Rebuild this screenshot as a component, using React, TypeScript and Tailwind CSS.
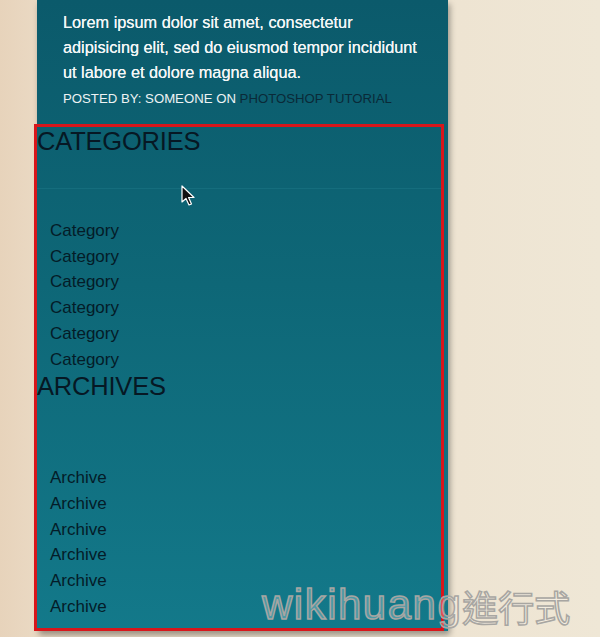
import React from "react";

const CATEGORIES = ["Category", "Category", "Category", "Category", "Category", "Category"];
const ARCHIVES = ["Archive", "Archive", "Archive", "Archive", "Archive", "Archive"];

function Cursor() {
	return (
		<svg width="16" height="22" viewBox="0 0 16 22" className="absolute left-[181px] top-[185px]">
			<path d="M1 1 L1 17 L5 13.5 L8 20 L10.5 19 L7.6 12.5 L13 12.5 Z" fill="#111" stroke="#fff" strokeWidth="1.2" strokeLinejoin="round" />
		</svg>
	);
}

export default function App() {
	return (
		<div className="relative h-[637px] w-[600px] overflow-hidden bg-[linear-gradient(90deg,#e7d3bb_0px,#ead9c3_37px,#eee4d2_460px,#efe7d6_600px)] font-['Liberation_Sans',Arial,sans-serif]">
			<div className="ml-[37px] w-[411px] h-[631px] bg-[linear-gradient(180deg,#0b5a6b_0%,#0e6777_45%,#13798a_100%)] shadow-[2px_4px_6px_rgba(0,0,0,0.35)]">
				<div className="pl-[26px] pt-[10px] h-[124px]">
					<p className="w-[362px] text-[16.3px] leading-[25px] text-[#f3f6f6] [text-shadow:0_0_0.4px_#fff]">
						Lorem ipsum dolor sit amet, consectetur adipisicing elit, sed do eiusmod tempor incididunt ut labore et dolore magna aliqua.
					</p>
					<p className="mt-[4px] text-[13.2px] leading-[20px] text-[#eef3f4] uppercase">
						Posted by: someone on <span className="text-[#0a2a38]">Photoshop Tutorial</span>
					</p>
				</div>

				<div className="-ml-[3px] w-[410px] h-[507px] border-[3px] border-[#d8161b]">
					<h2 className="text-[25.5px] leading-[28px] text-[#061824] tracking-[-0.2px]">CATEGORIES</h2>
					<div className="mt-[33px] border-t border-[#1a7484]/60" />
					<ul className="mt-[29px] pl-[13px] text-[17px] leading-[25.7px] text-[#041c28]">
						{CATEGORIES.map((c, i) => (
							<li key={i}>{c}</li>
						))}
					</ul>
					<h2 className="text-[25.5px] leading-[28px] text-[#061824] tracking-[-0.2px]">ARCHIVES</h2>
					<ul className="mt-[65px] pl-[13px] text-[17px] leading-[25.7px] text-[#041c28]">
						{ARCHIVES.map((a, i) => (
							<li key={i}>{a}</li>
						))}
					</ul>
				</div>
			</div>

			<Cursor />

			<div className="absolute left-[262px] top-[584px] flex items-end leading-none text-[#ffffff]/25 [-webkit-text-stroke:1.5px_#a8a6a2]">
				<span className="text-[42px] tracking-[1.5px] font-['Liberation_Sans',sans-serif]">wikihuang</span>
				<span className="text-[36px] leading-[40px] font-['Noto_Sans_CJK_TC',sans-serif]">進行式</span>
			</div>
		</div>
	);
}
